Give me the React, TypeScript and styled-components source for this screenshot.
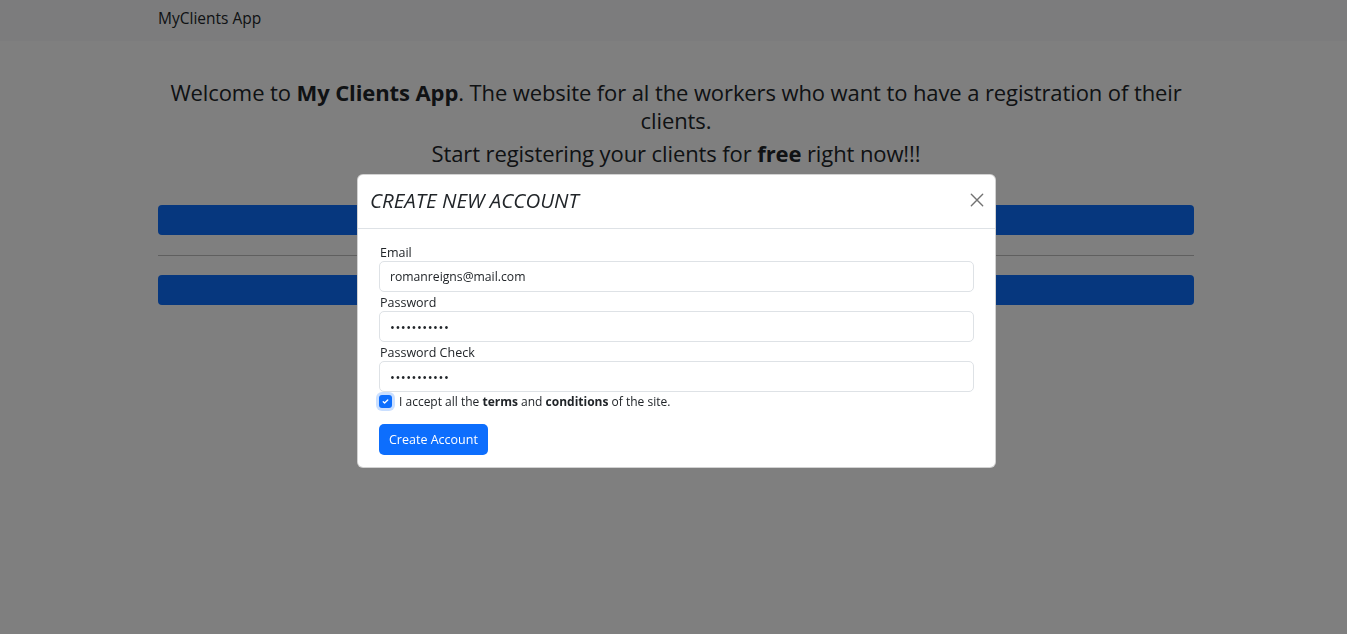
import React from "react";
import styled, { createGlobalStyle } from "styled-components";

const GlobalStyle = createGlobalStyle`
  html, body { margin: 0; padding: 0; }
  body {
    background: #ffffff;
    color: #212529;
    font-family: "Open Sans", "Noto Sans", sans-serif;
    font-size: 16px;
    overflow: hidden;
  }
  * { box-sizing: border-box; }
`;

const Page = styled.div`
  min-height: 634px;
`;

const Navbar = styled.nav`
  height: 41px;
  background: #f8f9fa;
  display: flex;
  align-items: flex-start;
  padding: 8px 0 0 158px;
`;

const Brand = styled.span`
  font-size: 15.5px;
  line-height: 21px;
  color: #212529;
`;

const Container = styled.main`
  width: 1036px;
  margin-left: 158px;
  padding-top: 37px;
  display: flex;
  flex-direction: column;
`;

const Heading = styled.h4<{ $gap?: number }>`
  margin: 0 0 ${(p) => p.$gap ?? 0}px;
  font-size: 22px;
  font-weight: 500;
  line-height: 28px;
  letter-spacing: -0.1px;
  text-align: center;
  b { font-weight: 700; }
`;

const WideButton = styled.button`
  height: 30px;
  width: 100%;
  border: none;
  border-radius: 4px;
  background: #0d6efd;
  color: #fff;
  font-family: inherit;
  font-size: 14px;
`;

const Rule = styled.hr`
  width: 100%;
  margin: 20px 0 19px;
  border: none;
  border-top: 1px solid rgba(0, 0, 0, 0.25);
`;

const Backdrop = styled.div`
  position: fixed;
  inset: 0;
  background: rgba(0, 0, 0, 0.5);
`;

const ModalLayer = styled.div`
  position: fixed;
  inset: 0;
  display: flex;
  justify-content: flex-start;
  align-items: flex-start;
  padding: 174px 0 0 357px;
`;

const Dialog = styled.div`
  width: 639px;
  background: #fff;
  border: 1px solid rgba(0, 0, 0, 0.175);
  border-radius: 6px;
  display: flex;
  flex-direction: column;
`;

const Header = styled.div`
  height: 54px;
  display: flex;
  align-items: center;
  justify-content: space-between;
  padding: 0 6px 3px 12px;
  border-bottom: 1px solid #dee2e6;
`;

const Title = styled.h5`
  margin: 0;
  font-size: 20.5px;
  font-weight: 500;
  font-style: italic;
  color: #212529;
  line-height: 24px;
`;

const Close = styled.button`
  width: 24px;
  height: 24px;
  border: none;
  background: transparent;
  padding: 0;
  display: flex;
  align-items: center;
  justify-content: center;
  opacity: 0.55;
`;

const Body = styled.form`
  padding: 13px 21px 12px;
  display: flex;
  flex-direction: column;
`;

const Label = styled.label`
  height: 19px;
  line-height: 21px;
  font-size: 12.5px;
  color: #212529;
  padding-left: 1px;
`;

const Input = styled.input<{ $secret?: boolean }>`
  height: 31px;
  width: 100%;
  border: 1px solid #dee2e6;
  border-radius: 5px;
  padding: 0 10px;
  font-family: inherit;
  font-size: ${(p) => (p.$secret ? "13px" : "12.2px")};
  letter-spacing: ${(p) => (p.$secret ? "0.5px" : "0")};
  color: #212529;
  outline: none;
`;

const CheckRow = styled.div`
  display: flex;
  align-items: center;
  gap: 7px;
  height: 19px;
`;

const CheckBox = styled.span`
  width: 13px;
  height: 13px;
  border-radius: 3px;
  background: #0d6efd;
  box-shadow: 0 0 0 3px rgba(13, 110, 253, 0.22);
  display: flex;
  align-items: center;
  justify-content: center;
`;

const CheckText = styled.span`
  font-size: 12px;
  color: #212529;
  b { font-weight: 700; }
`;

const Submit = styled.button`
  align-self: flex-start;
  margin-top: 13px;
  height: 31px;
  padding: 0 10px;
  border: none;
  border-radius: 5px;
  background: #0d6efd;
  color: #fff;
  font-family: inherit;
  font-size: 12.5px;
`;

export default function App() {
  return (
    <>
      <GlobalStyle />
      <Page>
        <Navbar>
          <Brand>MyClients App</Brand>
        </Navbar>
        <Container>
          <Heading $gap={5}>
            Welcome to <b>My Clients App</b>. The website for al the workers who want to have a registration of their
            <br />
            clients.
          </Heading>
          <Heading $gap={38}>
            Start registering your clients for <b>free</b> right now!!!
          </Heading>
          <WideButton>Log In</WideButton>
          <Rule />
          <WideButton>Create Account</WideButton>
        </Container>
      </Page>
      <Backdrop />
      <ModalLayer>
        <Dialog>
          <Header>
            <Title>CREATE NEW ACCOUNT</Title>
            <Close aria-label="Close">
              <svg width="14" height="14" viewBox="0 0 16 16">
                <path d="M1.5 1.5 L14.5 14.5 M14.5 1.5 L1.5 14.5" stroke="#000" strokeWidth="1.6" strokeLinecap="round" />
              </svg>
            </Close>
          </Header>
          <Body>
            <Label>Email</Label>
            <Input type="email" defaultValue="romanreigns@mail.com" />
            <Label>Password</Label>
            <Input $secret type="password" defaultValue="romanreigns" />
            <Label>Password Check</Label>
            <Input $secret type="password" defaultValue="romanreigns" />
            <CheckRow>
              <CheckBox>
                <svg width="9" height="9" viewBox="0 0 20 20">
                  <path d="M5 10.5l3 3 7-7" stroke="#fff" strokeWidth="3" fill="none" strokeLinecap="round" strokeLinejoin="round" />
                </svg>
              </CheckBox>
              <CheckText>
                I accept all the <b>terms</b> and <b>conditions</b> of the site.
              </CheckText>
            </CheckRow>
            <Submit type="button">Create Account</Submit>
          </Body>
        </Dialog>
      </ModalLayer>
    </>
  );
}
